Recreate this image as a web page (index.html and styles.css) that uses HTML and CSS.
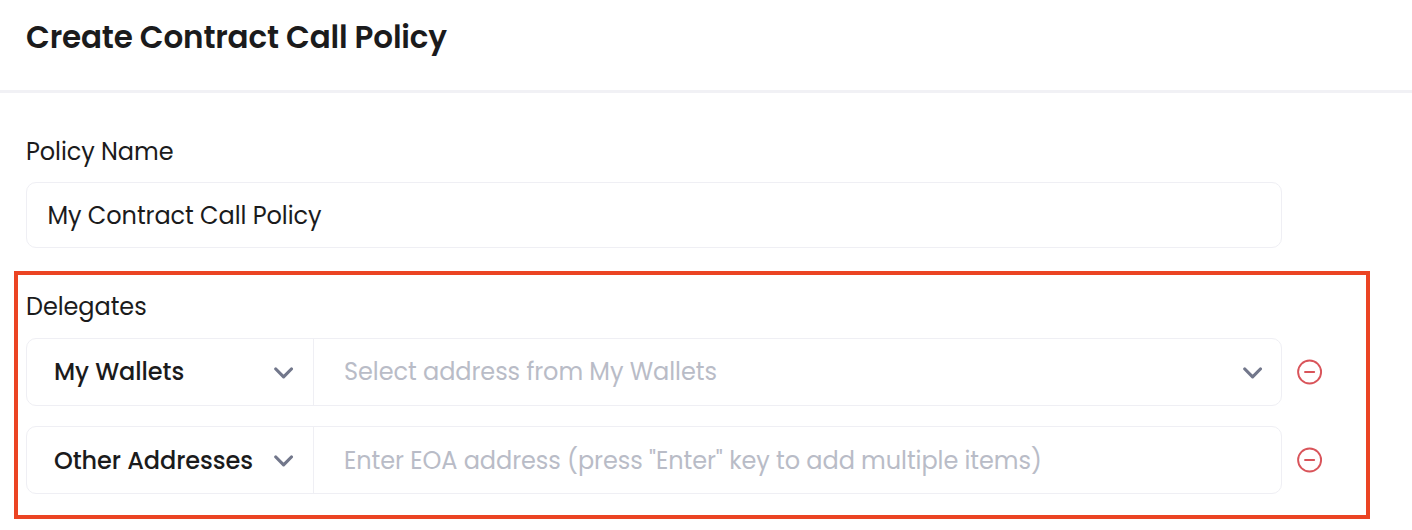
FILE: index.html
```html
<!DOCTYPE html>
<html lang="en">
<head>
<meta charset="utf-8">
<title>Create Contract Call Policy</title>
<link rel="stylesheet" href="styles.css">
</head>
<body>
<header class="header"><h1 class="title">Create Contract Call Policy</h1></header>
<main class="form">
  <section class="field">
    <div class="label">Policy Name</div>
    <div class="input">My Contract Call Policy</div>
  </section>
  <section class="delegates">
    <div class="label">Delegates</div>
    <div class="row">
      <div class="combo">
        <div class="kind"><span>My Wallets</span><svg class="chevron" viewBox="0 0 20 12"><path d="M1.800 2l7.800 7.900 7.800-7.900"/></svg></div>
        <div class="address"><span>Select address from My Wallets</span><svg class="chevron" viewBox="0 0 20 12"><path d="M1.800 2l7.800 7.900 7.800-7.900"/></svg></div>
      </div>
      <svg class="remove" viewBox="0 0 26 26"><circle cx="12.600" cy="13" r="11.500"/><path d="M8 13h9.200"/></svg>
    </div>
    <div class="row row-other">
      <div class="combo">
        <div class="kind"><span>Other Addresses</span><svg class="chevron" viewBox="0 0 20 12"><path d="M1.800 2l7.800 7.900 7.800-7.900"/></svg></div>
        <div class="address"><span>Enter EOA address (press "Enter" key to add multiple items)</span></div>
      </div>
      <svg class="remove" viewBox="0 0 26 26"><circle cx="12.600" cy="13" r="11.500"/><path d="M8 13h9.200"/></svg>
    </div>
  </section>
</main>
</body>
</html>
```
FILE: styles.css
```css
* { box-sizing: border-box; }
body {
  margin: 0;
  height: 530px;
  overflow: hidden;
  background: #fff;
  color: #1b1b1c;
  font: 400 24px/36px Poppins, Inter, sans-serif;
  letter-spacing: -0.070px;
  white-space: nowrap;
}
.header {
  height: 93px;
  padding: 13px 26px 0;
  border-bottom: 3px solid #f1f1f5;
}
.title { margin: 0; font-size: 31px; line-height: 48px; font-weight: 600; letter-spacing: -0.170px; }
.form { padding: 41px 42px 0 14px; }
.field { padding: 0 88px 0 12px; }
.label { height: 36px; }
.input {
  display: flex;
  align-items: center;
  height: 66px;
  margin-top: 12px;
  padding: 2px 20px 0 20.500px;
  border: 1px solid #efeff4;
  border-radius: 10px;
}
.delegates {
  height: 248px;
  margin-top: 23px;
  padding: 14px 43px 0 8px;
  border: 4px solid #eb4423;
}
.row { display: flex; align-items: center; gap: 15px; margin-bottom: 20px; }
.delegates .label { margin-bottom: 13px; }
.combo {
  display: flex;
  width: 1256px;
  height: 68px;
  border: 1px solid #efeff4;
  border-radius: 10px;
}
.kind, .address { display: flex; align-items: center; justify-content: space-between; }
.kind { width: 287px; padding: 0 19px 0 27px; border-right: 1px solid #efeff4; font-weight: 500; }
.address { flex: 1; padding: 0 18px 0 30px; color: #b9bcc7; }
.row-other .kind, .row-other .address { padding-top: 2px; }
.chevron { width: 20px; height: 12px; margin-top: 2px; }
.row-other .chevron { margin-top: 0; }
.chevron path { fill: none; stroke: #72778b; stroke-width: 3.200; stroke-linecap: round; stroke-linejoin: round; }
.remove { width: 26px; height: 26px; margin-top: -1px; }
.remove circle, .remove path { fill: none; stroke: #d9545a; stroke-width: 1.900; stroke-linecap: round; }
```
